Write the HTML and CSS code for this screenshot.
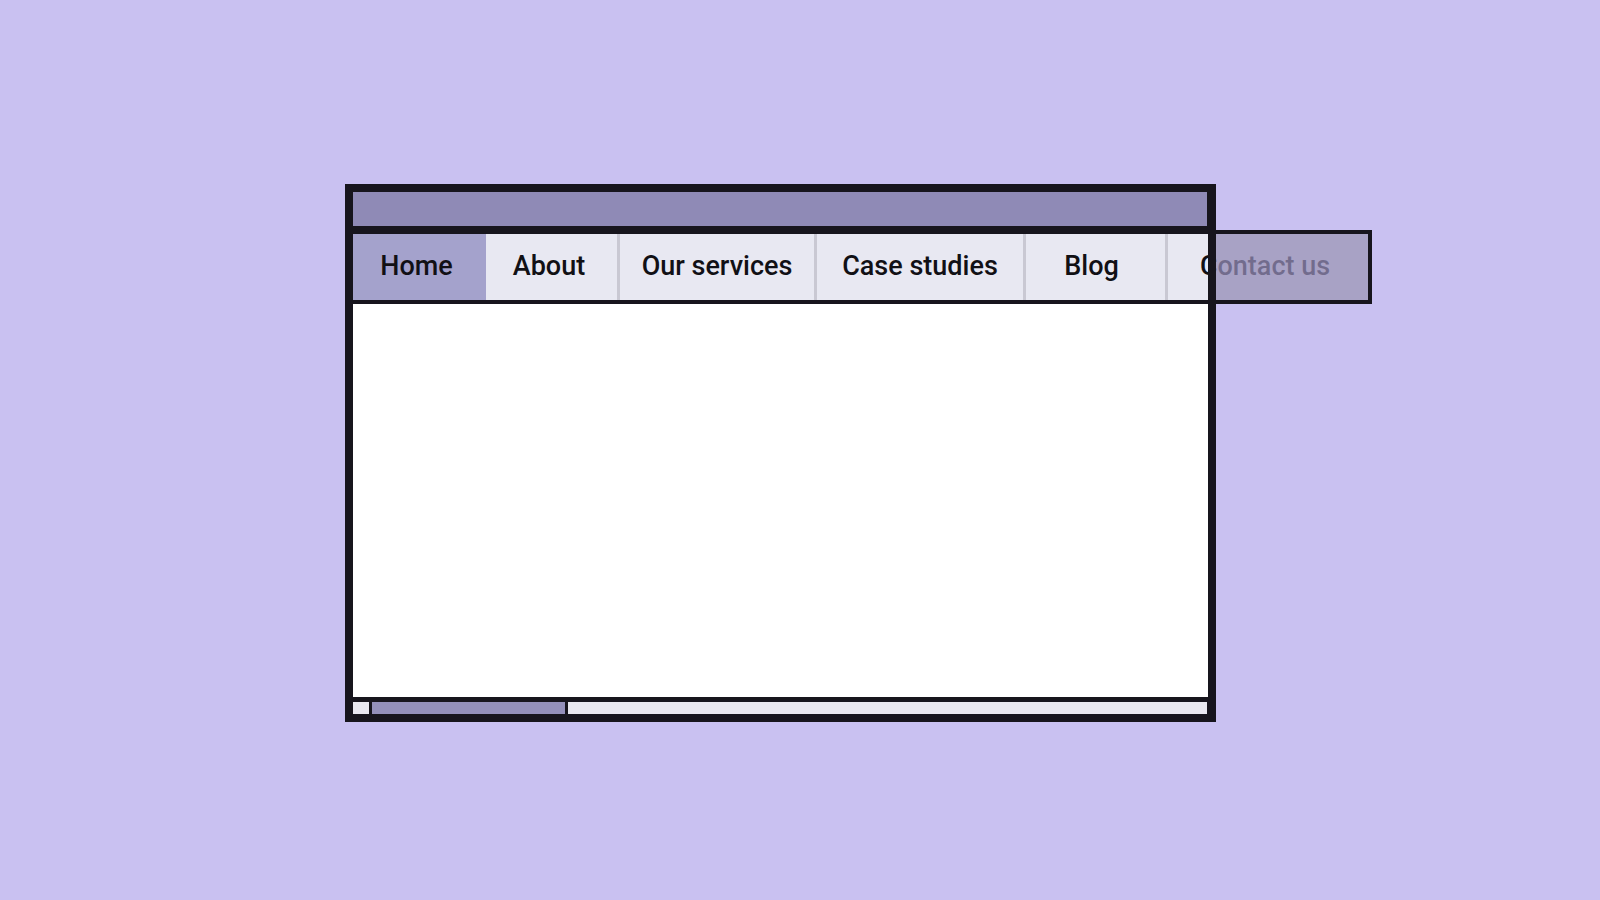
FILE: index.html
```html
<!DOCTYPE html>
<html lang="en">
<head>
<meta charset="utf-8">
<title>Overflowing navigation</title>
<link rel="stylesheet" href="styles.css">
</head>
<body>
  <div class="stage">
    <div class="window">
      <div class="titlebar"></div>
      <nav class="nav">
        <a class="tab tab-home active">Home</a>
        <a class="tab tab-about">About</a>
        <a class="tab tab-services sep">Our services</a>
        <a class="tab tab-cases sep">Case studies</a>
        <a class="tab tab-blog sep">Blog</a>
        <a class="tab tab-contact sep">Contact us</a>
      </nav>
      <div class="content"></div>
      <div class="scrollbar">
        <div class="scroll-btn"></div>
        <div class="scroll-thumb"></div>
        <div class="scroll-rest"></div>
      </div>
      <div class="overflow-shade"></div>
    </div>
  </div>
</body>
</html>
```

FILE: styles.css
```css
html, body {
  margin: 0;
  padding: 0;
  background: #c9c1f1;
  width: 1600px;
  height: 900px;
  overflow: hidden;
  font-family: Roboto, "Liberation Sans", sans-serif;
}

.stage {
  padding: 184px 0 0 345px;
}

.window {
  position: relative;
  width: 871px;
  height: 538px;
  box-sizing: border-box;
  padding: 8px 9px 8px 8px;
  background: #17151d;
  display: flex;
  flex-direction: column;
}

.window::after {
  content: "";
  position: absolute;
  inset: 0;
  border: 8px solid #17151d;
  box-sizing: border-box;
  pointer-events: none;
  z-index: 3;
}

.titlebar {
  height: 34px;
  flex: 0 0 auto;
  background: #8f8ab6;
  border-bottom: 4px solid #17151d;
}

.nav {
  display: flex;
  align-self: flex-start;
  flex: 0 0 auto;
  width: 1015px;
  height: 66px;
  border: 4px solid #17151d;
  border-left: none;
  background: #e8e8f2;
  position: relative;
  z-index: 1;
}

.tab {
  display: flex;
  align-items: center;
  justify-content: center;
  box-sizing: border-box;
  height: 100%;
  padding-bottom: 2px;
  font-size: 27px;
  font-weight: 500;
  color: #111015;
  background: #e8e8f2;
  flex: 0 0 auto;
  white-space: nowrap;
}

.tab.sep {
  border-left: 3px solid #c9c8d3;
}

.tab.active {
  background: #a4a2cc;
}

.tab-home { width: 133px; padding-right: 6px; }
.tab-about { width: 131px; padding-right: 5px; }
.tab-services { width: 197px; }
.tab-cases { width: 209px; }
.tab-blog { width: 142px; padding-right: 8px; }
.tab-contact { width: 203px; padding-right: 6px; }

.content {
  flex: 0 0 auto;
  height: 393px;
  background: #ffffff;
  margin-right: -1px;
}

.scrollbar {
  flex: 0 0 auto;
  height: 12px;
  margin-top: 5px;
  display: flex;
  gap: 3px;
  background: #17151d;
}

.scroll-btn {
  width: 16px;
  background: #e9e8f0;
}

.scroll-thumb {
  width: 193px;
  background: #9490ba;
}

.scroll-rest {
  flex: 1 1 auto;
  background: #e9e8f0;
}

.overflow-shade {
  position: absolute;
  left: 100%;
  top: 50px;
  width: 152px;
  height: 66px;
  background: rgba(147, 139, 182, 0.75);
  z-index: 2;
  pointer-events: none;
}
```
